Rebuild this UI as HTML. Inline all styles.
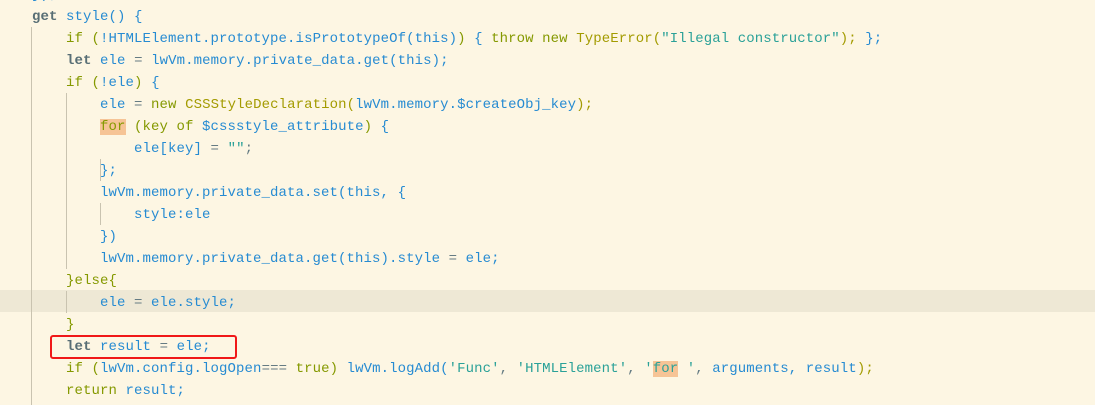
<!DOCTYPE html>
<html><head><meta charset="utf-8"><style>
html,body{margin:0;padding:0;background:#fdf6e3;width:1095px;height:405px;overflow:hidden;position:relative}
pre{position:absolute;left:32px;top:5px;margin:0;font-family:"Liberation Mono",monospace;font-size:14px;letter-spacing:0.1px;line-height:22px;color:#657b83;white-space:pre}
.k{color:#859900}.i{color:#268bd2}.s{color:#2aa198}.b{color:#586e75;font-weight:bold}.c{color:#a39b00}.p{color:#657b83}
.hl{background:#f6c496}
.g{position:absolute;width:1px;background:#c9c3b0}
.row{position:absolute;left:0;top:290px;width:1095px;height:22px;background:#eee8d5}
.box{position:absolute;left:50px;top:335px;width:183px;height:20px;border:2px solid #f01818;border-radius:3px}
</style></head><body>
<div class="row"></div>
<div class="g" style="left:31px;top:27px;height:378px"></div>
<div class="g" style="left:66px;top:93px;height:176px"></div>
<div class="g" style="left:100px;top:159px;height:22px"></div>
<div class="g" style="left:100px;top:203px;height:22px"></div>
<div class="g" style="left:66px;top:291px;height:22px"></div>
<pre style="top:-16px"><span class="i">});</span>
<span class="b">get</span> <span class="i">style() {</span>
    <span class="k">if (</span><span class="i">!HTMLElement.prototype.isPrototypeOf(this)</span><span class="k">)</span> <span class="i">{</span> <span class="k">throw new</span> <span class="c">TypeError(</span><span class="s">"Illegal constructor"</span><span class="c">);</span> <span class="i">};</span>
    <span class="b">let</span> <span class="i">ele</span> = <span class="i">lwVm.memory.private_data.get(this);</span>
    <span class="k">if (</span><span class="i">!ele</span><span class="k">)</span> <span class="i">{</span>
        <span class="i">ele</span> = <span class="k">new</span> <span class="c">CSSStyleDeclaration(</span><span class="i">lwVm.memory.$createObj_key</span><span class="c">);</span>
        <span class="k hl">for</span><span class="k"> (key of </span><span class="i">$cssstyle_attribute</span><span class="k">)</span> <span class="i">{</span>
            <span class="i">ele[key]</span> = <span class="s">""</span>;
        <span class="i">};</span>
        <span class="i">lwVm.memory.private_data.set(this, {</span>
            <span class="i">style:ele</span>
        <span class="i">})</span>
        <span class="i">lwVm.memory.private_data.get(this).style</span> = <span class="i">ele;</span>
    <span class="k">}else{</span>
        <span class="i">ele</span> = <span class="i">ele.style;</span>
    <span class="k">}</span>
    <span class="b">let</span> <span class="i">result</span> = <span class="i">ele;</span>
    <span class="k">if (</span><span class="i">lwVm.config.logOpen</span>=== <span class="k">true)</span> <span class="i">lwVm.logAdd(</span><span class="s">'Func'</span>, <span class="s">'HTMLElement'</span>, <span class="s">'</span><span class="s hl">for</span><span class="s"> '</span>, <span class="i">arguments, result</span><span class="c">);</span>
    <span class="k">return</span> <span class="i">result;</span></pre>
<div class="box"></div>
</body></html>
